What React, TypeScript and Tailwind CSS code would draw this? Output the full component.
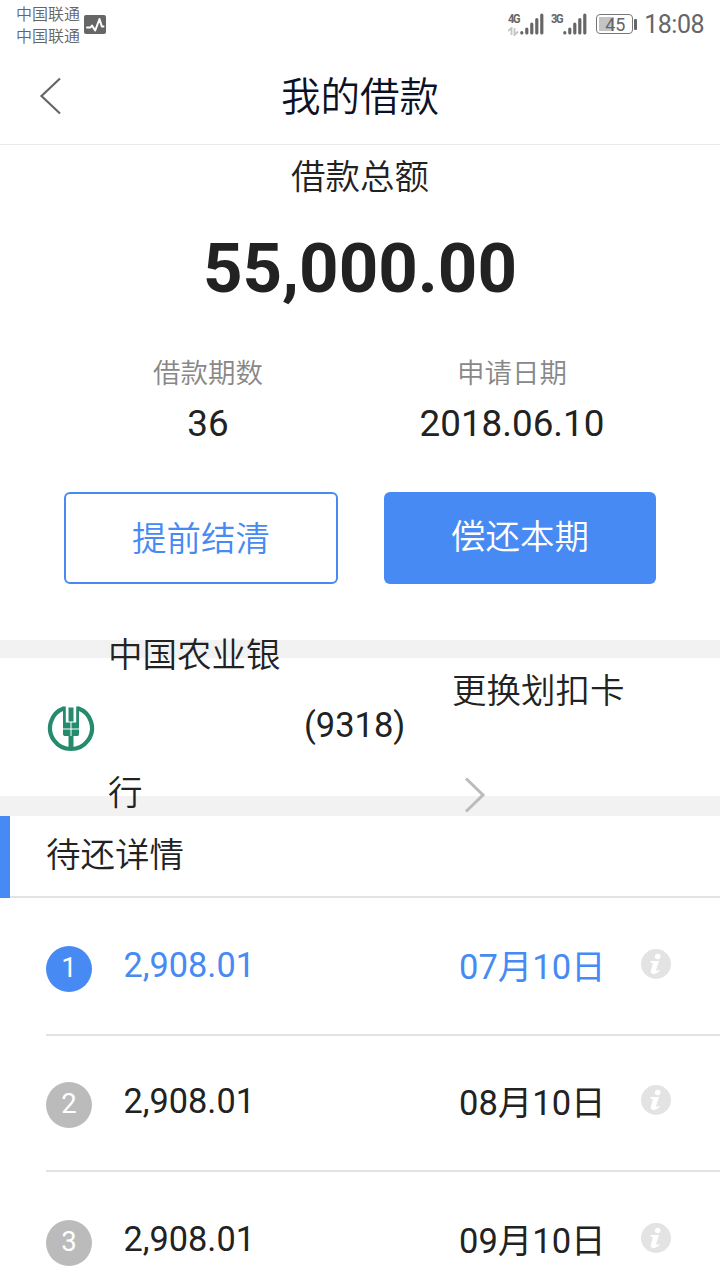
const StatusBar = () => {
  return (
    <div className="flex h-12 justify-between text-[#666]">
      <div className="flex pl-4">
        <div className="pt-1 text-[16px] leading-[21.5px] font-[350]">
          <p>中国联通</p>
          <p>中国联通</p>
        </div>
        <svg
          className="mt-[15px] ml-1"
          width="22"
          height="19"
          viewBox="0 0 22 19"
          fill="none"
        >
          <rect width="22" height="19" rx="2" fill="#666" />
          <path
            d="M3 12.500h3.500l1.500-2 3.200 5L15.500 4l2.300 7.500h1.700"
            stroke="#fff"
            strokeWidth="2"
            strokeLinecap="round"
            strokeLinejoin="round"
          />
        </svg>
      </div>

      <div className="flex pr-4">
        <Signal label="4G" data />
        <Signal label="3G" />
        <div className="mt-[14px] ml-[2px] flex h-5 items-center">
          <div className="flex h-5 w-[37px] rounded-[4px] border-[1.5px] border-[#777] p-[2px]">
            <div className="flex h-full w-[15px] bg-[#c4c4c4]">
              <span className="w-[31px] shrink-0 pl-[6px] text-[18px] leading-[15px]">
                45
              </span>
            </div>
          </div>
          <div className="ml-px h-[11px] w-[3px] rounded-[1px] bg-[#666]" />
        </div>
        <span className="ml-[7px] pt-[9px] text-[25px] leading-8 tracking-[-0.5px]">
          18:08
        </span>
      </div>
    </div>
  );
};

const Signal = ({ label, data }: { label: string; data?: boolean }) => {
  return (
    <div className="mr-[7px] flex pt-[12px]">
      <div className="w-[12px] text-[13px] leading-[13px] font-bold tracking-[-1.5px]">
        <p className="w-4 origin-left scale-x-[0.85]">{label}</p>
        {data && (
          <svg className="mt-[2px]" width="12" height="9" viewBox="0 0 12 9">
            <path
              d="M0 4L3.500 1v7M6.500 1v7L10 4.500"
              fill="none"
              stroke="#c4c4c4"
              strokeWidth="1.8"
            />
          </svg>
        )}
      </div>
      <svg width="24" height="24" viewBox="0 0 24 24">
        <g stroke="#666" strokeWidth="3.2" strokeLinecap="round">
          <path d="M1.800 20.500v.5M6.800 17v4M11.800 12v9M16.800 7.500V21M21.800 3v18" />
        </g>
      </svg>
    </div>
  );
};

const BankLogo = () => {
  return (
    <svg className="mt-px" width="48" height="48" viewBox="0 0 48 48" fill="none">
      <path
        d="M17 4.200a21 21 0 1 0 14 0"
        stroke="#258b6c"
        strokeWidth="4.200"
      />
      <path
        d="M16 2.500h2.800v16h4.700v6h-7.500zM32 2.500h-2.800v16h-4.700v6h7.500zM21.500 3.500h5v14h-5zM16 25.500h7.500v6.500h-6.500l-1-1.500zM24.500 25.500h7.500v5l-1 1.500h-6.500zM21.500 32h5v12h-5z"
        fill="#258b6c"
      />
    </svg>
  );
};

const InfoIcon = () => {
  return (
    <svg width="30" height="30" viewBox="0 0 30 30">
      <circle cx="15" cy="15" r="15" fill="#e3e3e3" />
      <circle cx="16.700" cy="7.500" r="2.800" fill="#fff" />
      <path
        d="M9.500 12h8.500l-2.800 8.700c-.4 1.400.9 1.300 3 .1l.4.900c-1.800 2-3.700 3.200-6 3.200-2.600 0-3.300-1.600-2.700-3.700l1.800-5.800c.3-1.100-.3-1.700-2.200-1.800z"
        fill="#fff"
      />
    </svg>
  );
};

const repayments = [
  { amount: "2,908.01", date: "07月10日", row: "h-[138px] pt-12", active: true },
  { amount: "2,908.01", date: "08月10日", row: "h-[136px] pt-[46px]" },
  { amount: "2,908.01", date: "09月10日", row: "h-[138px] pt-12" },
];

const App = () => {
  return (
    <div className="h-[1280px] w-[720px] overflow-hidden bg-white font-['Roboto','Noto_Sans_CJK_SC',sans-serif] text-[34.5px] text-[#222]">
      <StatusBar />

      {/* Header */}
      <header className="flex h-[97px] items-center border-b border-[#ebebeb]">
        <svg
          className="ml-[38px]"
          width="24"
          height="40"
          viewBox="0 0 24 40"
          fill="none"
        >
          <path d="M22 2.500L3.500 20L22 37.500" stroke="#666" strokeWidth="2.200" />
        </svg>
        <h1 className="mr-[62px] flex-1 pt-1 text-center text-[39.5px] font-[350] text-[#0b1226]">
          我的借款
        </h1>
      </header>

      {/* Loan summary */}
      <section className="h-[495px] text-center">
        <p className="pt-[7px] leading-[50px] font-[350]">借款总额</p>
        <p className="mt-[27px] text-[69px] leading-[80px] font-bold">
          55,000.00
        </p>
        <div className="mt-[45px] flex px-14">
          <div className="flex-1">
            <p className="text-[27.5px] leading-10 font-[350] text-[#888]">
              借款期数
            </p>
            <p className="mt-[5px] text-[36.8px] leading-[50px]">36</p>
          </div>
          <div className="flex-1">
            <p className="text-[27.5px] leading-10 font-[350] text-[#888]">
              申请日期
            </p>
            <p className="mt-[5px] text-[36.8px] leading-[50px]">2018.06.10</p>
          </div>
        </div>
        <div className="mt-[43px] flex justify-between px-16">
          <button className="h-[92px] w-[274px] rounded-md border-2 border-[#478af3] pt-[3px] font-[350] text-[#478af3]">
            提前结清
          </button>
          <button className="h-[92px] w-[272px] rounded-md bg-[#478af3] font-[350] text-white">
            偿还本期
          </button>
        </div>
      </section>

      {/* Bank card */}
      <section className="border-t-[18px] border-b-[20px] border-[#f2f2f2]">
        <div className="flex h-[138px] items-center">
          <div className="ml-[47px] w-[61px]">
            <BankLogo />
          </div>
          <p className="w-[196px] pr-5 pb-[6px] leading-[138px] font-[350]">
            中国农业银行
          </p>
          <p className="w-[148px] pb-[3px]">(9318)</p>
          <div>
            <p className="mt-[26px] leading-[50px] font-[350]">更换划扣卡</p>
            <svg
              className="mt-[60px] ml-3"
              width="22"
              height="38"
              viewBox="0 0 22 38"
              fill="none"
            >
              <path d="M2 2.500L19 19L2 35.500" stroke="#bbb" strokeWidth="3" />
            </svg>
          </div>
        </div>
      </section>

      {/* Repayment list */}
      <section>
        <div className="flex h-[82px] border-b-2 border-[#e3e3e3]">
          <div className="-mb-[2px] w-[10px] bg-[#478af3]" />
          <h2 className="pt-[14px] pl-9 leading-[50px] font-[350]">待还详情</h2>
        </div>
        <ul className="pl-[46px]">
          {repayments.map((item, index) => (
            <li
              key={item.date}
              className={`flex items-start border-b-2 border-[#e3e3e3] ${item.row} ${
                item.active ? "text-[#478af3]" : ""
              }`}
            >
              <span
                className={`h-[46px] w-[46px] rounded-full text-center text-[27.5px] leading-[43px] text-white ${
                  item.active ? "bg-[#478af3]" : "bg-[#bbb]"
                }`}
              >
                {index + 1}
              </span>
              <span className="-mt-[6px] ml-[31.5px] w-[335.5px] text-[34.3px] leading-[50px]">
                {item.amount}
              </span>
              <span className="-mt-1 w-[182px] leading-[50px]">
                {item.date}
              </span>
              <span className="mt-[3px]">
                <InfoIcon />
              </span>
            </li>
          ))}
        </ul>
      </section>
    </div>
  );
};

export default App;
